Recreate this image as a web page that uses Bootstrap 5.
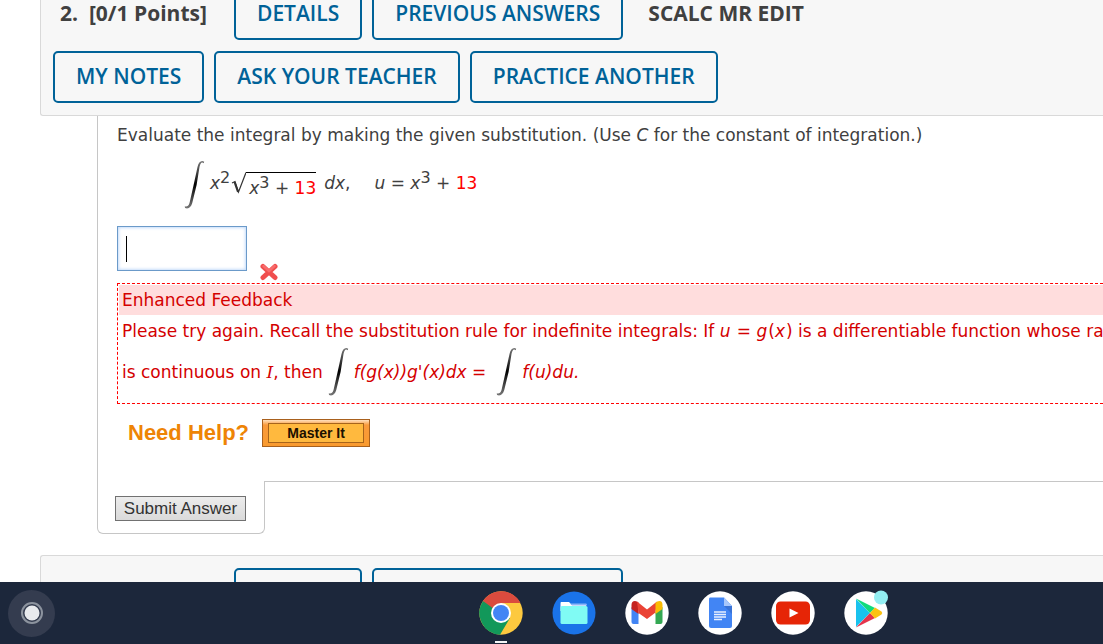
<!DOCTYPE html>
<html lang="en">
<head>
<meta charset="utf-8">
<meta name="viewport" content="width=device-width, initial-scale=1">
<title>Homework – Question 2</title>
<link href="https://cdn.jsdelivr.net/npm/bootstrap@5.3.0/dist/css/bootstrap.min.css" rel="stylesheet">
<style>
body{font-family:"DejaVu Sans",sans-serif;font-size:17px;line-height:24px;color:#404040;background:#fff}
.scroller{min-height:0}
.sheet{margin-left:40px}
.sheet-top{margin-top:-25px}
.q-head{background:#f7f7f7;border:1px solid #d9d9d9;border-right:0;border-radius:3px 0 0 3px;padding:12px;font-family:"Open Sans",sans-serif;font-size:21px;font-weight:600}
.q-row{min-height:52px;gap:10px}
.q-row + .q-row{margin-top:11px}
.q-num,.q-src{padding-bottom:2px}
.q-num{font-weight:700;width:171px;padding-left:7px;white-space:pre}
.q-src{padding-left:15px}
.btn-q{--bs-btn-font-family:"Open Sans",sans-serif;--bs-btn-font-size:21px;--bs-btn-font-weight:600;--bs-btn-line-height:28px;--bs-btn-padding-x:21px;--bs-btn-border-width:2px;--bs-btn-border-radius:5px;--bs-btn-color:#006298;--bs-btn-border-color:#006298;--bs-btn-hover-color:#fff;--bs-btn-hover-bg:#006298;padding-top:9px;padding-bottom:11px;white-space:nowrap}
.q-body{margin-left:57px;border-left:1px solid #c6c6c6;padding:7px 0 34px 19px}
.equation{margin:14px 0 17px 67px;height:48px;line-height:24px}
.equation sup{font-size:16px;top:-6px;line-height:0}
.term{padding-bottom:4px}
.int-sign{width:22px;height:50px;flex:none}
.radical{margin-top:1px}
.radicand{border-top:1px solid #000;padding:3px 0 0 3px}
.num-red{color:#f00}
.answer{width:130px;height:45px;border:1px solid #6b9ac9;border-radius:0;box-shadow:inset 0 0 3px 1px #c5dcfa;padding:0 9px}
.caret-bar{position:absolute;left:9px;top:10px;width:1px;height:26px;background:#000}
.wrong{width:18px;height:18px;margin:37px 0 0 13px}
.fb{border:1px dashed #f00;border-right:0;color:#d40000;padding:1px 0 6px 1px;margin-top:2px;white-space:nowrap;overflow:hidden}
.fb-head{background:#fdd;padding:3px 0 3px 3px}
.fb-text{padding:4px 0 0 3px}
.fb-text i{margin-right:1px}
.fb-math{height:50px;margin:4px 0 0 3px}
.fb-int{margin-left:5px}
.fb-fn{margin:0 5px 0 4px}
.serif-i{font-family:"DejaVu Serif",serif;font-style:italic}
.help{font-family:"Liberation Sans",sans-serif;margin:15px 0 0 11px;gap:13px}
.help-label{color:#ee8405;font-size:22px;font-weight:700}
.btn-master{width:108px;height:28px;border:1px solid #a8601d;border-radius:0;padding:3px 5px;background:linear-gradient(#ffe0bd 0,#f99a3b 5px,#f99a2e);line-height:1}
.btn-master span{display:block;border:1px solid #a7641b;background:#ffb93e;color:#1c1000;font-size:14px;font-weight:700;line-height:19px;height:20px}
.btn-master:hover{background:#f99a3b}
.foot{margin-left:57px}
.foot-tab{width:168px;border:1px solid #c6c6c6;border-top:0;border-radius:0 0 6px 6px;padding:15px 0 12px 17px}
.foot-line{border-top:1px solid #c6c6c6;margin-left:-1px}
.btn-submit{width:131px;height:25px;background:linear-gradient(#ececec,#dadada);border:1px solid #717171;border-radius:0;font-family:"Liberation Sans",sans-serif;font-size:17px;line-height:20px;color:#333;padding:0}
.next-q{margin-top:21px}
.shelf{background:#1c273b;height:62px;padding:0 3px 0 8px;flex:none}
.launcher{width:47px;height:47px;border-radius:50%;border:0;background:#343c4f;padding:0}
.apps{gap:29px}
.app-ico{width:44px;height:44px;display:block;overflow:visible}
.spread-2{flex-grow:2}
.app-on::after{content:"";position:absolute;left:16px;bottom:-8px;width:12px;height:2px;background:#f2f4f6}
</style>
</head>
<body class="vh-100 d-flex flex-column overflow-hidden">
<svg width="0" height="0" class="position-absolute" aria-hidden="true"><linearGradient id="ink" x1="0" y1="0" x2="0" y2="1"><stop offset="0" stop-color="#777"/><stop offset=".3" stop-color="#333"/><stop offset=".5" stop-color="#000"/><stop offset=".7" stop-color="#333"/><stop offset="1" stop-color="#777"/></linearGradient><symbol id="integral" viewBox="0 0 22 50"><path d="M19.800 3.200C17.500 1.500 16.500 3 15.500 7L12.600 25 8.500 42C7.500 46.500 5 49.500 1 48L.8 46.300C4.200 47.200 5.200 45 6 41L9.600 25 13.500 7C14.500 2 17.500-.3 20.200 1.700z" fill="url(#ink)"/></symbol></svg>

<main class="scroller flex-grow-1 overflow-hidden">
  <div class="sheet sheet-top">
    <header class="q-head">
      <div class="q-row d-flex align-items-center">
        <div class="q-num">2.  [0/1 Points]</div>
        <button type="button" class="btn btn-q">DETAILS</button>
        <button type="button" class="btn btn-q">PREVIOUS ANSWERS</button>
        <div class="q-src fw-bold">SCALC MR EDIT</div>
      </div>
      <div class="q-row d-flex align-items-center">
        <button type="button" class="btn btn-q">MY NOTES</button>
        <button type="button" class="btn btn-q">ASK YOUR TEACHER</button>
        <button type="button" class="btn btn-q">PRACTICE ANOTHER</button>
      </div>
    </header>

    <section class="q-body">
      <label for="answer" class="d-block text-nowrap">Evaluate the integral by making the given substitution. (Use <i>C</i> for the constant of integration.)</label>
      <div class="equation d-flex align-items-center text-nowrap">
        <svg class="int-sign" aria-hidden="true"><use href="#integral"/></svg>
        <span class="term ms-1"><i>x</i><sup>2</sup></span>
        <span class="radical d-flex">
          <svg width="16" height="28" viewBox="0 0 16 28" aria-hidden="true"><path d="M2 11l3-1.500L8.500 20 16 .5" fill="none" stroke="#333" stroke-width="1.200"/><path d="M4.500 10l3.500 10" stroke="#333" stroke-width="2"/></svg>
          <span class="radicand"><i>x</i><sup>3</sup> + <span class="num-red">13</span></span>
        </span>
        <span class="term ms-2"><i>dx</i>,</span>
        <span class="term ms-4"><i>u</i> = <i>x</i><sup>3</sup> + <span class="num-red">13</span></span>
      </div>
      <div class="d-flex align-items-start">
        <div class="position-relative"><input id="answer" type="text" class="form-control answer" autocomplete="off"><span class="caret-bar"></span></div>
        <svg class="wrong" viewBox="0 0 18 18" role="img" aria-label="Incorrect"><path d="M3 3.500L15 14.500M15 3.500L3 14.500" stroke="#f04e4e" stroke-width="5" stroke-linecap="round" fill="none"/><path d="M3.500 3L9 8L14.500 3" stroke="#f86c6c" stroke-width="2.500" stroke-linecap="round" fill="none"/></svg>
      </div>
      <div class="fb">
        <div class="fb-head">Enhanced Feedback</div>
        <div class="fb-text">Please try again. Recall the substitution rule for indefinite integrals: If <i>u</i> = <i>g</i>(<i>x</i>) is a differentiable function whose range</div>
        <div class="fb-math d-flex align-items-center">
          <span>is continuous on <span class="serif-i">I</span>, then</span>
          <svg class="int-sign fb-int" aria-hidden="true"><use href="#integral"/></svg>
          <i class="fb-fn">f(g(x))g'(x)dx =</i>
          <svg class="int-sign fb-int" aria-hidden="true"><use href="#integral"/></svg>
          <i class="fb-fn">f(u)du.</i>
        </div>
      </div>
      <div class="help d-flex align-items-center">
        <span class="help-label">Need Help?</span>
        <button type="button" class="btn btn-master"><span>Master It</span></button>
      </div>
    </section>
    <div class="foot d-flex">
      <div class="foot-tab"><button type="submit" class="btn btn-submit d-block">Submit Answer</button></div>
      <div class="foot-line flex-grow-1"></div>
    </div>

    <header class="q-head next-q">
      <div class="q-row d-flex align-items-center">
        <div class="q-num">3.  [0/1 Points]</div>
        <button type="button" class="btn btn-q">DETAILS</button>
        <button type="button" class="btn btn-q">PREVIOUS ANSWERS</button>
      </div>
    </header>
  </div>
</main>

<nav class="shelf d-flex align-items-center">
  <button type="button" class="launcher" aria-label="Launcher"><svg class="d-block mx-auto" width="24" height="24" viewBox="0 0 24 24"><circle cx="12" cy="12" r="10" fill="none" stroke="#8c939e" stroke-width="2"/><circle cx="12" cy="12" r="7.500" fill="#e8eaed"/></svg></button>
  <div class="spread-2"></div>
  <div class="apps d-flex">
    <a href="#" class="app-on position-relative" aria-label="Chrome"><svg class="app-ico" viewBox="0 0 44 44"><circle cx="22" cy="22" r="21.700" fill="#fdc93f"/><path d="M22 22L4 10A21.700 21.700 0 0 0 21 43.700L31 27z" fill="#12985a"/><path d="M22 22H12.500L4 10A21.700 21.700 0 0 1 41.500 12H22z" fill="#db4b3e"/><path d="M4 10l9 16 2-8z" fill="#12985a"/><circle cx="22" cy="22" r="10" fill="#fff"/><circle cx="22" cy="22" r="8" fill="#4285f4"/></svg></a>
    <a href="#" aria-label="Files"><svg class="app-ico" viewBox="0 0 44 44"><circle cx="22" cy="22" r="21.500" fill="#1a73e8"/><path d="M9 11h8l3 3H34v6H8.500v-7q0-2 .5-2z" fill="#fff"/><path d="M18 12.500h16q1 0 1 2h-15z" fill="#8ab4f8"/><rect x="8.500" y="15" width="27" height="18" rx="1.500" fill="#80fbf4"/></svg></a>
    <a href="#" aria-label="Gmail"><svg class="app-ico" viewBox="0 0 44 44"><circle cx="22" cy="22" r="21.700" fill="#fff"/><path d="M6.500 16l7 5v12H8.500q-2 0-2-2z" fill="#4285f4"/><path d="M30.500 21l7-5v15q0 2-2 2h-5z" fill="#34a853"/><path d="M6.500 18v-4q0-4 3.500-4 2 0 3.500 1.500V23z" fill="#c5221f"/><path d="M12 10.500L22 18.500 32 10.500 30.500 21.500 22 28l-8.500-6z" fill="#ea4335"/><path d="M30.500 12Q32 10 34.500 10q3 0 3 4v4l-7 5z" fill="#fbbc04"/></svg></a>
    <a href="#" aria-label="Docs"><svg class="app-ico" viewBox="0 0 44 44"><circle cx="22" cy="22" r="21.700" fill="#fff"/><path d="M12 6.500h14l8 8.500v20q0 2-2 2H13q-2 0-2-2V8.500q0-2 1-2z" fill="#4285f4"/><path d="M26 6.500l8 8.500h-8z" fill="#a8c7fa"/><path d="M26 15l8 8v-8z" fill="#3973d6"/><path d="M16 21h12M16 23.500h12M16 26h12M16 28.500h8" stroke="#e8f0fe" stroke-width="1.300"/></svg></a>
    <a href="#" aria-label="YouTube"><svg class="app-ico" viewBox="0 0 44 44"><circle cx="22" cy="22" r="21.700" fill="#fff"/><rect x="5" y="10.500" width="34" height="23" rx="4.500" fill="#e62506"/><path d="M18.500 17.500v9l9-4.500z" fill="#fff"/></svg></a>
    <a href="#" aria-label="Play Store"><svg class="app-ico" viewBox="0 0 44 44"><circle cx="22" cy="22" r="21.700" fill="#fff"/><path d="M12 8v28l14-14z" fill="#19c2ee"/><path d="M12 7.500L31 17l-5 5z" fill="#10dc7c"/><path d="M12 36.500L31 27l-5-5z" fill="#e5344c"/><path d="M31 16.500l6.500 4q1.500 1.500 0 3L31 27.500 26 22z" fill="#fbc212"/><circle cx="37" cy="6.500" r="7" fill="#93eef2"/></svg></a>
  </div>
  <div class="flex-grow-1"></div>
</nav>
<script src="https://cdn.jsdelivr.net/npm/bootstrap@5.3.0/dist/js/bootstrap.bundle.min.js"></script>
</body>
</html>
